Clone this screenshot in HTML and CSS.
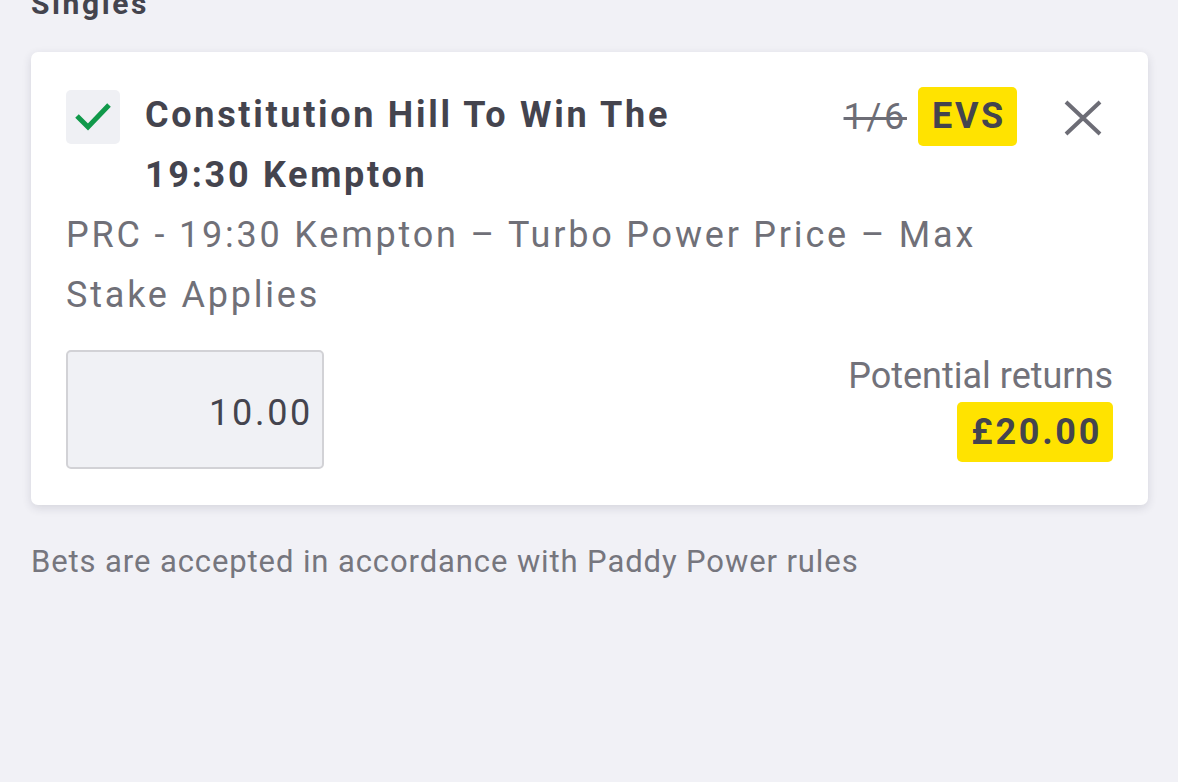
FILE: index.html
```html
<!DOCTYPE html>
<html lang="en">
<head>
<meta charset="utf-8">
<title>Bet slip</title>
<link rel="stylesheet" href="styles.css">
</head>
<body>
<main class="page">
  <h2 class="section-title">Singles</h2>
  <section class="card">
    <div class="top-row">
      <div class="checkbox">
        <svg width="54" height="54" viewBox="0 0 54 54"><polyline points="11,26 22,37 43,15" fill="none" stroke="#10994a" stroke-width="5" stroke-linecap="butt" stroke-linejoin="miter"/></svg>
      </div>
      <div class="title">Constitution Hill To Win The 19:30 Kempton</div>
      <div class="odds">
        <span class="old-odds">1/6</span>
        <span class="new-odds">EVS</span>
      </div>
      <button class="close" aria-label="Remove">
        <svg width="60" height="60" viewBox="0 0 60 60"><path d="M13 14 L47 46 M47 14 L13 46" stroke="#6d6d76" stroke-width="4" fill="none"/></svg>
      </button>
    </div>
    <p class="desc">PRC - 19:30 Kempton – Turbo Power Price – Max Stake Applies</p>
    <div class="bottom-row">
      <div class="stake">10.00</div>
      <div class="returns">
        <span class="returns-label">Potential returns</span>
        <span class="returns-value">£20.00</span>
      </div>
    </div>
  </section>
  <p class="footer">Bets are accepted in accordance with Paddy Power rules</p>
</main>
</body>
</html>
```
FILE: styles.css
```css
html, body {
  margin: 0;
  padding: 0;
  background: #f1f1f6;
  font-family: Roboto, "Noto Sans", sans-serif;
  color: #44444e;
}
.page {
  padding: 0 30px 0 31px;
}
.section-title {
  margin: -14px 0 0 0;
  font-size: 30px;
  line-height: 36px;
  font-weight: 700;
  letter-spacing: 2.6px;
  color: #44444e;
}
.card {
  margin-top: 30px;
  background: #fff;
  border-radius: 7px;
  box-shadow: 0 3px 10px rgba(40, 40, 70, 0.14);
  padding: 33px 35px 36px 35px;
}
.top-row {
  display: flex;
  align-items: flex-start;
}
.checkbox {
  width: 54px;
  height: 54px;
  margin-top: 5px;
  background: #eff0f4;
  border-radius: 5px;
  flex: none;
  margin-right: 25px;
}
.checkbox svg { display: block; }
.title {
  flex: 1;
  max-width: 600px;
  font-size: 36px;
  line-height: 60px;
  font-weight: 700;
  letter-spacing: 2.7px;
  color: #44444e;
}
.odds {
  margin-left: auto;
  display: flex;
  align-items: center;
  gap: 11px;
  margin-top: 2px;
}
.old-odds {
  font-size: 36px;
  letter-spacing: 2.7px;
  color: #6d6d76;
  text-decoration: line-through;
  text-decoration-thickness: 3px;
}
.new-odds {
  background: #ffe300;
  border-radius: 5px;
  font-size: 36px;
  font-weight: 700;
  letter-spacing: 2.7px;
  line-height: 59px;
  padding: 0 11px 0 14px;
  color: #44444e;
}
.close {
  margin-left: 36px;
  width: 60px;
  height: 60px;
  padding: 0;
  border: 0;
  background: none;
  margin-top: 3px;
}
.close svg { display: block; }
.desc {
  margin: 0;
  max-width: 935px;
  font-size: 36px;
  line-height: 60px;
  letter-spacing: 2.8px;
  color: #707078;
}
.bottom-row {
  display: flex;
  justify-content: space-between;
  align-items: flex-start;
  margin-top: 25px;
}
.stake {
  box-sizing: content-box;
  width: 245px;
  height: 111px;
  padding: 4px 9px 0 0;
  border: 2px solid #d2d2d6;
  border-radius: 5px;
  background: #f0f1f5;
  font-size: 36px;
  line-height: 115px;
  letter-spacing: 2.7px;
  text-align: right;
  color: #44444e;
}
.returns {
  display: flex;
  flex-direction: column;
  align-items: flex-end;
  margin-top: 4px;
}
.returns-label {
  font-size: 36px;
  line-height: 44px;
  color: #72727a;
}
.returns-value {
  margin-top: 4px;
  background: #ffe300;
  border-radius: 5px;
  font-size: 36px;
  font-weight: 700;
  letter-spacing: 2.7px;
  line-height: 60px;
  padding: 0 11px 0 14px;
  color: #44444e;
}
.footer {
  margin: 39px 0 0 0;
  font-size: 31px;
  line-height: 36px;
  letter-spacing: 0.9px;
  color: #76767e;
}
```
